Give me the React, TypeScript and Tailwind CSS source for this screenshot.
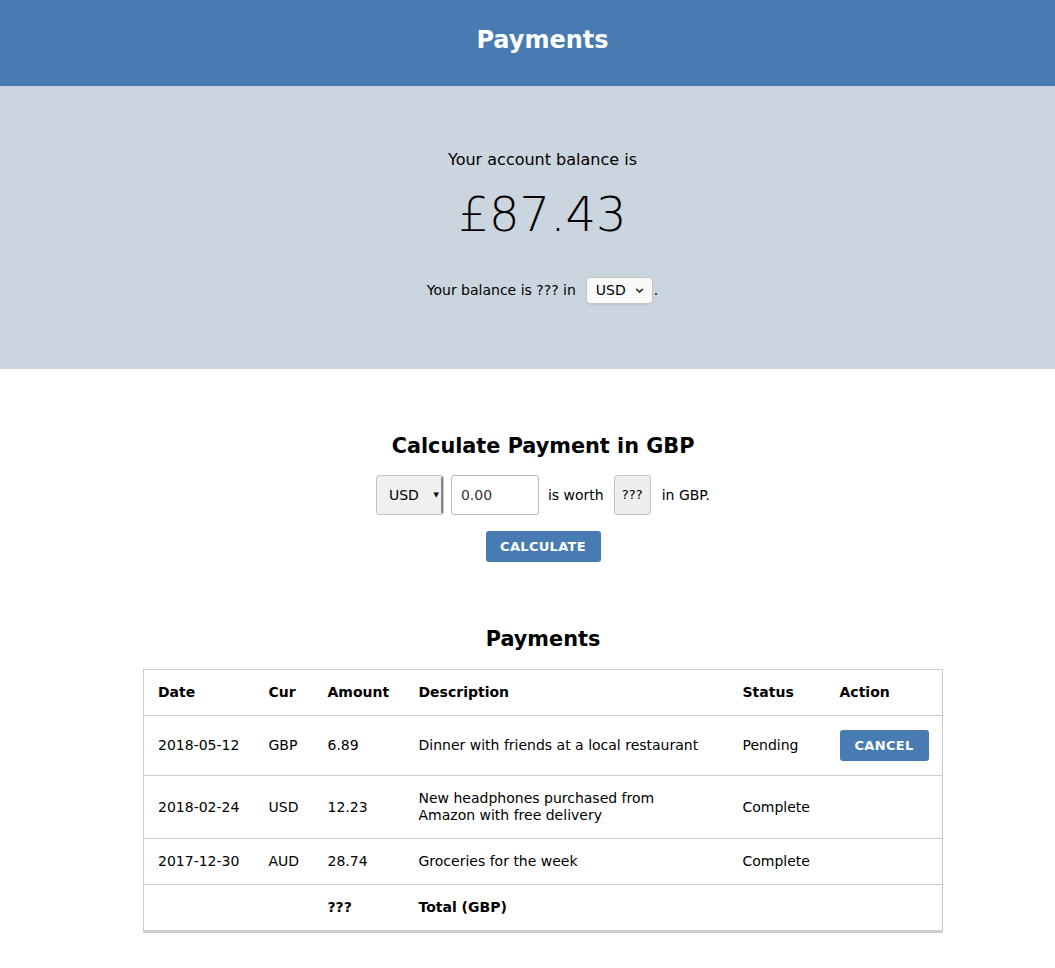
const payments = [
  { date: "2018-05-12", cur: "GBP", amount: "6.89", description: "Dinner with friends at a local restaurant", status: "Pending", cancel: true },
  { date: "2018-02-24", cur: "USD", amount: "12.23", description: "New headphones purchased from Amazon with free delivery", status: "Complete", cancel: false },
  { date: "2017-12-30", cur: "AUD", amount: "28.74", description: "Groceries for the week", status: "Complete", cancel: false },
];

export default function App() {
  return (
    <div className="min-h-screen bg-white text-black font-['DejaVu_Sans',sans-serif]">
      <header className="h-[86px] bg-[#477bb1] flex items-center justify-center pl-[30px] pb-[6px]">
        <h1 className="text-white text-[24px] font-bold">Payments</h1>
      </header>

      <section className="h-[283px] bg-[#cbd5df] flex flex-col items-center pt-[64px] pl-[30px]">
        <p className="text-[16px] leading-[19px]">Your account balance is</p>
        <p className="text-[48px] font-extralight leading-[56px] mt-[17px]">£87.43</p>
        <div className="flex items-center mt-[35px] text-[14px]">
          <span>Your balance is ??? in</span>
          <div className="ml-[10px] w-[67px] h-[27px] bg-[#fafafa] border border-[#c4c4c4] rounded-[4px] flex items-center justify-between pl-[9px] pr-[7px] shadow-[0_1px_1px_rgba(0,0,0,0.08)]">
            <span>USD</span>
            <svg className="w-[11px] h-[11px]" viewBox="0 0 10 10" fill="none" stroke="#333" strokeWidth={1.4}>
              <path d="M2 3.5l3 3 3-3" />
            </svg>
          </div>
          <span className="ml-[1px]">.</span>
        </div>
      </section>

      <section className="flex flex-col items-center pt-[63px] pl-[31px]">
        <h2 className="text-[20.8px] font-bold leading-[28px]">Calculate Payment in GBP</h2>
        <div className="flex items-center mt-[15px] text-[14px]">
          <div className="w-[68px] h-[40px] bg-[#f0f0f0] border border-[#c4c4c4] rounded-[3px] flex items-center pl-[12px] relative">
            <span>USD</span>
            <span className="absolute right-[4px] top-[14px] text-[7px]">▼</span>
            <span className="absolute right-0 top-[1px] bottom-[1px] w-[2px] bg-[#888]" />
          </div>
          <div className="ml-[7px] w-[88px] h-[40px] border border-[#bbb] rounded-[3px] flex items-center pl-[9px] text-[#333]">0.00</div>
          <span className="ml-[9px]">is worth</span>
          <div className="ml-[10px] w-[37px] h-[40px] bg-[#eee] border border-[#c4c4c4] rounded-[3px] flex items-center justify-center text-[13px]">???</div>
          <span className="ml-[11px]">in GBP.</span>
        </div>
        <button className="mt-[16px] w-[115px] h-[31px] bg-[#477bb1] rounded-[3px] text-white text-[13px] font-bold tracking-[0.3px]">
          CALCULATE
        </button>

        <h2 className="text-[20.8px] font-bold leading-[28px] mt-[63px]">Payments</h2>
        <table className="mt-[16px] w-[800px] border border-[#ccc] border-collapse text-[14px] shadow-[0_2px_0_#ccc]">
          <thead>
            <tr className="h-[46px] border-b border-[#ccc] text-left">
              <th className="pl-[14px] w-[125px] font-bold">Date</th>
              <th className="w-[59px] font-bold">Cur</th>
              <th className="w-[91px] font-bold">Amount</th>
              <th className="w-[324px] font-bold">Description</th>
              <th className="w-[97px] font-bold">Status</th>
              <th className="font-bold">Action</th>
            </tr>
          </thead>
          <tbody>
            {payments.map((p) => (
              <tr key={p.date} className={`border-b border-[#ccc] ${p.cancel ? "h-[60px]" : p.description.length > 45 ? "h-[63px]" : "h-[46px]"}`}>
                <td className="pl-[14px]">{p.date}</td>
                <td>{p.cur}</td>
                <td>{p.amount}</td>
                <td className="leading-[17px]">
                  <div className="max-w-[290px]">{p.description}</div>
                </td>
                <td>{p.status}</td>
                <td>
                  {p.cancel && (
                    <button className="w-[89px] h-[31px] bg-[#477bb1] rounded-[3px] text-white text-[13px] font-bold tracking-[0.3px]">
                      CANCEL
                    </button>
                  )}
                </td>
              </tr>
            ))}
            <tr className="h-[46px] font-bold">
              <td className="pl-[14px]"></td>
              <td></td>
              <td>???</td>
              <td>Total (GBP)</td>
              <td></td>
              <td></td>
            </tr>
          </tbody>
        </table>
      </section>
    </div>
  );
}
